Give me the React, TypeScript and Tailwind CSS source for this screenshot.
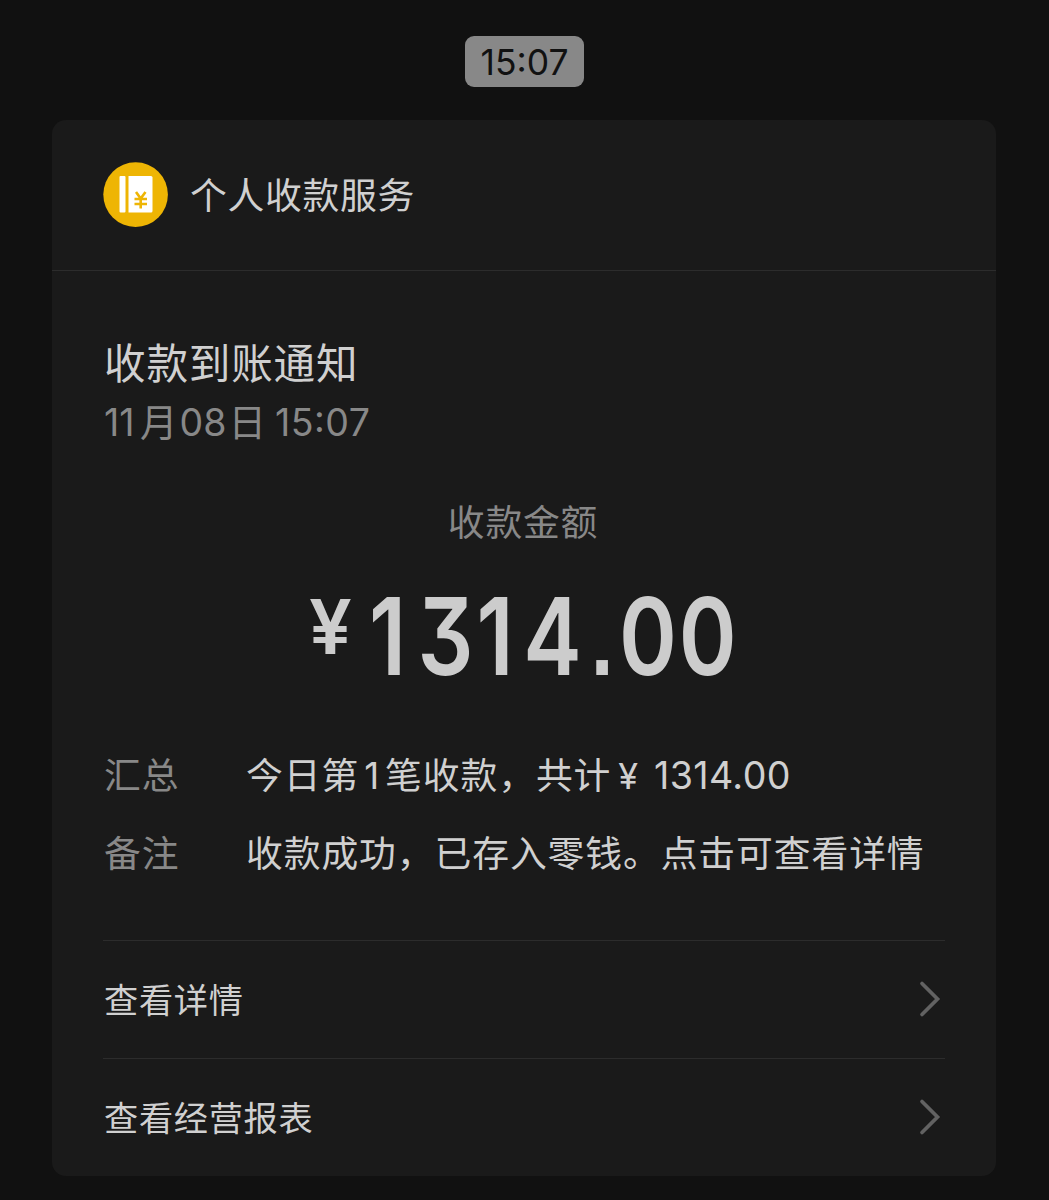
import type { ReactNode } from "react";

const actions = ["查看详情", "查看经营报表"];

const amount = [
  { char: "1", style: "mr-[14px]" },
  { char: "3", style: "mr-[3.5px]" },
  { char: "1", style: "mr-[12px]" },
  { char: "4", style: "mr-[11px]" },
  { char: ".", style: "mr-[6.5px] font-['Liberation_Sans'] text-[100px] font-bold" },
  { char: "0", style: "mr-[2.5px]" },
  { char: "0", style: "" }
];

function ServiceIcon() {
  return (
    <svg width="66" height="66" viewBox="0 0 66 66" fill="none">
      <circle cx="32.600" cy="32.600" r="32.3" fill="#EEB504" />
      <rect x="16.5" y="14" width="6" height="36.5" rx="1" fill="#fff" />
      <path d="M25.500 14H48Q49.500 14 49.500 15.500V49Q49.500 50.500 48 50.500H25.500Z" fill="#fff" />
      <path d="M33 30L37.700 36.500L42.500 30M31.500 37H44M31.500 42H44M37.700 36.500V46.500" stroke="#EEB504" strokeWidth="2.600" />
    </svg>
  );
}

function Arrow() {
  return (
    <svg className="-mt-0.5" width="24" height="38" viewBox="0 0 24 38" fill="none">
      <path d="M3 3.500L18.500 19L3 34.500" stroke="#626262" strokeWidth="3.700" strokeLinecap="round" strokeLinejoin="miter" />
    </svg>
  );
}

function DetailRow({ label, children }: { label: string; children: ReactNode }) {
  return (
    <div className="flex pl-px text-[36.8px] leading-[50px] tracking-[0.9px]">
      <dt className="w-[142px] text-[#888888]">{label}</dt>
      <dd className="whitespace-nowrap">{children}</dd>
    </div>
  );
}

export default function App() {
  return (
    <main className="flex h-[1200px] w-[1049px] flex-col bg-[#111111] pl-[52px] pt-9 font-['Inter','Noto_Sans_CJK_SC',sans-serif] text-[#D0D0D0]">
      <div className="ml-[413px] flex h-[51px] w-[119px] items-center justify-center rounded-[9px] bg-[#888888] pt-0.5 text-[35.500px] text-[#111111] [font-feature-settings:'case']">
        15:07
      </div>

      <section className="mt-[33px] h-[1056px] w-[944px] rounded-[14px] bg-[#1A1A1A]">
        <header className="flex h-[151px] items-center border-b border-[#2C2C2C] pl-[51px]">
          <ServiceIcon />
          <h1 className="ml-[21px] pt-[3px] text-[36.800px] leading-none tracking-[0.7px]">个人收款服务</h1>
        </header>

        <div className="px-[51px]">
          <h2 className="pl-px pt-[68px] text-[41.600px] leading-[50px] tracking-[0.800px]">收款到账通知</h2>
          <p className="mt-[9px] flex pl-px text-[37.500px] leading-[50px] text-[#888888] [font-feature-settings:'case']">
            <span className="w-[36px]">11</span>月
            <span className="w-[51px] pl-0.5">08</span>日
            <span className="pl-[9px] tracking-[0.5px]">15:07</span>
          </p>

          <p className="mt-[50px] pr-[2px] text-center text-[36.800px] leading-[50px] tracking-[0.8px] text-[#888888]">收款金额</p>
          <div className="mt-[32px] flex h-[116px] font-semibold text-[#CCCCCC]">
            <span className="ml-[203px] w-[62.500px] pl-[3px] text-[76px] leading-[92px]">¥</span>
            <span className="-mt-[2px] flex origin-left scale-x-[0.82] items-baseline text-[107px] leading-[116px] [font-feature-settings:'cv09']">
              {amount.map((digit, i) => (
                <span key={i} className={digit.style}>{digit.char}</span>
              ))}
            </span>
          </div>

          <dl className="mt-[55px] space-y-[28px]">
            <DetailRow label="汇总">
              今日第<span className="inline-block w-[26px] text-center">1</span>笔收款，共计
              <span className="ml-[7px] mr-[15px] text-[36px]">¥</span>
              <span className="text-[37.600px] tracking-[0.400px]">1314.00</span>
            </DetailRow>
            <DetailRow label="备注">收款成功，已存入零钱。点击可查看详情</DetailRow>
          </dl>

          <div className="mt-[61px]">
            {actions.map((action) => (
              <button key={action} className="flex h-[118px] w-full items-center justify-between border-t border-[#2C2C2C] pl-px pr-[2px] text-[34.200px] tracking-[0.7px]">
                <span className="pt-0.5">{action}</span>
                <Arrow />
              </button>
            ))}
          </div>
        </div>
      </section>
    </main>
  );
}
